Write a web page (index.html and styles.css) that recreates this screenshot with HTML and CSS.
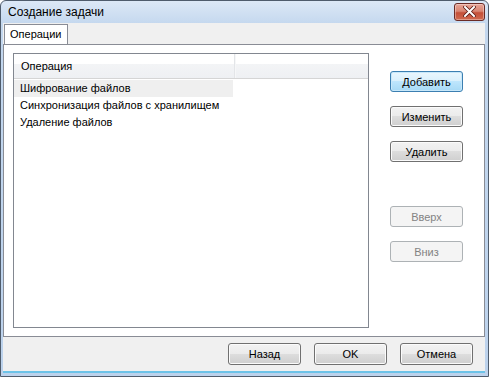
FILE: index.html
```html
<!DOCTYPE html>
<html lang="ru">
<head>
    <meta charset="UTF-8">
    <title>Создание задачи</title>
    <link rel="stylesheet" href="styles.css">
</head>
<body>
    <div class="window">
        <div class="titlebar">
            <span class="title">Создание задачи</span>
            <button class="close-btn" title="Закрыть">
                <svg width="13" height="11" viewBox="0 0 13 11">
                    <path d="M2 1 L11 10 M11 1 L2 10" stroke="#5a1a14" stroke-width="3.6" stroke-linecap="square"/>
                    <path d="M2 1 L11 10 M11 1 L2 10" stroke="#ffffff" stroke-width="2" stroke-linecap="square"/>
                </svg>
            </button>
        </div>

        <div class="client">
            <div class="tabs">
                <div class="tab active">Операции</div>
            </div>

            <div class="tab-page">
                <div class="listview">
                    <div class="lv-header">
                        <div class="lv-col first">Операция</div>
                        <div class="lv-col rest"></div>
                    </div>
                    <div class="lv-row selected">Шифрование файлов</div>
                    <div class="lv-row">Синхронизация файлов с хранилищем</div>
                    <div class="lv-row">Удаление файлов</div>
                </div>

                <div class="side-buttons">
                    <button class="btn default">Добавить</button>
                    <button class="btn">Изменить</button>
                    <button class="btn">Удалить</button>
                    <div class="spacer"></div>
                    <button class="btn" disabled>Вверх</button>
                    <button class="btn" disabled>Вниз</button>
                </div>
            </div>

            <div class="footer">
                <button class="btn wide">Назад</button>
                <button class="btn wide">OK</button>
                <button class="btn wide">Отмена</button>
            </div>
        </div>
    </div>
</body>
</html>
```

FILE: styles.css
```css
/* Window frame */
html, body {
    margin: 0;
    padding: 0;
    background: #ffffff;
}

body {
    font-family: 'Liberation Sans', Arial, sans-serif;
    font-size: 11px;
    color: #000;
}

.window {
    width: 489px;
    height: 377px;
    box-sizing: border-box;
    border: 1px solid #4f5c6c;
    border-radius: 6px 6px 0 0;
    background: linear-gradient(#dce8f6, #c3d7ee 24px, #bcd2ec);
    padding: 0 3px 3px 2px;
    display: flex;
    flex-direction: column;
}

/* Title bar */
.titlebar {
    height: 22px;
    display: flex;
    align-items: center;
    justify-content: space-between;
    padding-left: 5px;
    flex-shrink: 0;
}

.title {
    font-size: 12px;
    color: #000;
    margin-top: -1px;
}

.close-btn {
    width: 31px;
    height: 18px;
    margin-top: -1px;
    border: 1px solid #6a2b26;
    border-radius: 3px;
    background: linear-gradient(#e8a597, #d98572 45%, #c44f38 55%, #d06a50);
    display: flex;
    align-items: center;
    justify-content: center;
    padding: 0;
    box-shadow: inset 0 0 0 1px rgba(255, 255, 255, 0.35);
}

/* Client area */
.client {
    flex: 1;
    background: #f0f0f0;
    border-bottom: 2px solid #6cc3e8;
    display: flex;
    flex-direction: column;
}

.tabs {
    display: flex;
    padding: 2px 0 0 1px;
    height: 19px;
    position: relative;
    z-index: 1;
}

.tab {
    padding: 2px 6px 0 5px;
    border: 1px solid #898c95;
    border-bottom: none;
    background: #ffffff;
    height: 18px;
    box-sizing: border-box;
    line-height: 15px;
    width: 64px;
}

.tab.active {
    height: 20px;
    margin-top: -1px;
}

.tab-page {
    background: #ffffff;
    border: 1px solid #898c95;
    height: 293px;
    box-sizing: border-box;
    display: flex;
    padding: 8px 21px 8px 9px;
}

/* List view */
.listview {
    width: 356px;
    border: 1px solid #828790;
    box-sizing: border-box;
    background: #ffffff;
}

.lv-header {
    display: flex;
    height: 24px;
    border-bottom: 1px solid #d5d5d5;
    background: linear-gradient(#ffffff, #ffffff 40%, #f3f4f6 41%, #eef0f3);
    margin-top: 0;
}

.lv-col {
    line-height: 24px;
    padding-left: 7px;
}

.lv-col.first {
    width: 213px;
    border-right: 1px solid #e3e5e8;
    box-shadow: 1px 0 0 #f6f7f8;
}

.lv-col.rest {
    flex: 1;
}

.lv-row {
    height: 17px;
    line-height: 17px;
    width: 213px;
    padding-left: 6px;
}

.lv-row:first-of-type {
    margin-top: 0;
}

.lv-row.selected {
    background: #efefef;
}

.lv-header + .lv-row {
    margin-top: 1px;
}

/* Buttons */
.side-buttons {
    flex: 1;
    display: flex;
    flex-direction: column;
    align-items: flex-end;
    gap: 14px;
    padding-top: 18px;
}

.side-buttons .spacer {
    height: 16px;
}

.btn {
    width: 73px;
    height: 21px;
    font-family: 'Liberation Sans', Arial, sans-serif;
    font-size: 11px;
    color: #000;
    border: 1px solid #707070;
    border-radius: 3px;
    background: linear-gradient(#f2f2f2, #ebebeb 49%, #dddddd 50%, #cfcfcf);
    box-shadow: inset 0 0 0 1px #fbfbfb;
    padding: 0;
    cursor: pointer;
}

.btn.default {
    border-color: #3c7fb1;
    background: linear-gradient(#eaf6fd, #d9f0fc 49%, #bee6fd 50%, #a7d9f5);
    box-shadow: inset 0 0 0 1px #c8e8fa;
}

.btn:disabled {
    border-color: #adb2b5;
    background: #f4f4f4;
    color: #838383;
    box-shadow: none;
    cursor: default;
}

.btn.wide {
    width: 73px;
    height: 22px;
}

/* Footer */
.footer {
    flex: 1;
    display: flex;
    justify-content: flex-end;
    align-items: center;
    gap: 13px;
    padding-right: 12px;
}
```
